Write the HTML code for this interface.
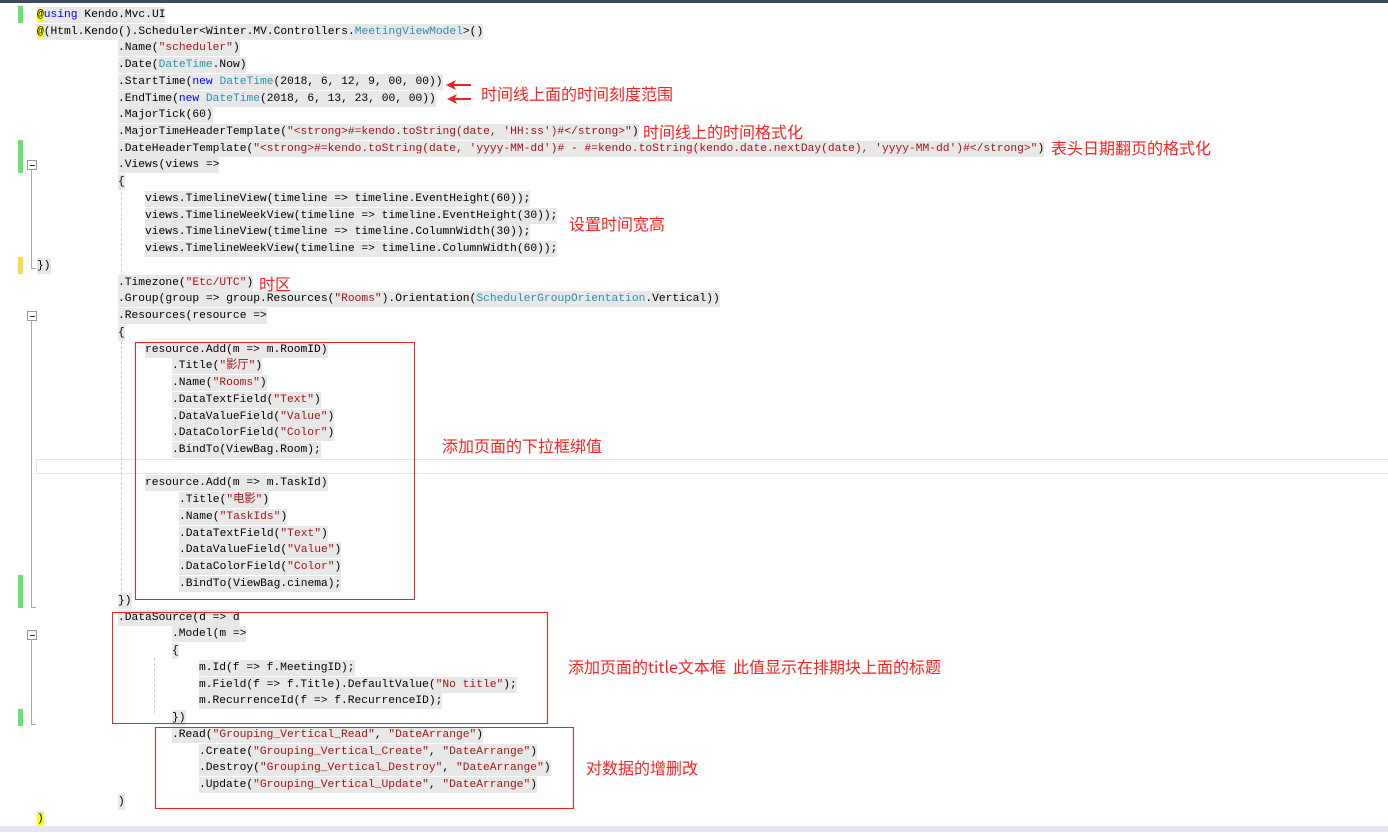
<!DOCTYPE html>
<html><head><meta charset="utf-8"><style>
body{margin:0;width:1388px;height:832px;background:#fff;position:relative;overflow:hidden;font-family:"Liberation Mono","Noto Sans CJK SC",monospace;}
.w{position:absolute;left:0;top:1px;width:1388px;height:832px;}
.l{position:absolute;height:16px;white-space:pre;font-size:11.28px;line-height:16px;color:#000;}
.l span.b{background:#e8e8e8;display:inline-block;height:16px;}
.s{color:#a31515}.k{color:#0000ff}.t{color:#2b91af}.y{background:#ffff00}
.n{position:absolute;color:#ff2020;font-family:"Noto Sans CJK SC","WenQuanYi Zen Hei",sans-serif;font-size:16px;line-height:20px;white-space:pre;}
.box{position:absolute;border:1px solid #ee2222;}
.g{position:absolute;left:18px;width:5px;background:#6ee06e;}
.yb{position:absolute;left:18px;width:5px;background:#f0e050;}
.c{position:absolute;left:27px;width:8px;height:8px;border:1px solid #999;background:#fff;}
.c:after{content:"";position:absolute;left:2px;top:4px;width:5px;height:1px;background:#333;}
.v{position:absolute;left:31px;width:1px;background:#aaa;}
.d{position:absolute;width:0;border-left:1px dashed #ccc;}
</style></head><body>
<div style="position:absolute;left:0;top:0;width:1388px;height:3px;background:#3c4a5e"></div>
<div style="position:absolute;left:0;top:826px;width:1388px;height:6px;background:#e6e6ec"></div>
<div style="position:absolute;left:36px;top:459px;width:1352px;height:13px;border:1px solid #e4e4ee"></div>

<div class="g" style="top:6px;height:17px"></div>
<div class="g" style="top:140px;height:33px"></div>
<div class="yb" style="top:257px;height:17px"></div>
<div class="g" style="top:575px;height:33px"></div>
<div class="g" style="top:709px;height:17px"></div>
<div class="c" style="top:160px"></div><div class="v" style="top:170px;height:99px"></div><div style="position:absolute;left:31px;top:268px;width:5px;height:1px;background:#aaa"></div>
<div class="c" style="top:311px"></div><div class="v" style="top:321px;height:287px"></div><div style="position:absolute;left:31px;top:607px;width:5px;height:1px;background:#aaa"></div>
<div class="c" style="top:630px"></div><div class="v" style="top:640px;height:85px"></div><div style="position:absolute;left:31px;top:724px;width:5px;height:1px;background:#aaa"></div>
<div class="d" style="left:121px;top:182px;height:110px"></div>
<div class="d" style="left:121px;top:341px;height:250px"></div>
<div class="d" style="left:154px;top:658px;height:55px"></div>

<div class="w">
<div class="l" style="top:6px;left:37px"><span class="b"><span class="y">@</span><span class="k">using</span> Kendo.Mvc.UI</span></div>
<div class="l" style="top:23px;left:37px"><span class="b"><span class="y">@</span>(Html.Kendo().Scheduler&lt;Winter.MV.Controllers.<span class="t">MeetingViewModel</span>&gt;()</span></div>
<div class="l" style="top:39px;left:118px"><span class="b">.Name(<span class="s">"scheduler"</span>)</span></div>
<div class="l" style="top:56px;left:118px"><span class="b">.Date(<span class="t">DateTime</span>.Now)</span></div>
<div class="l" style="top:73px;left:118px"><span class="b">.StartTime(<span class="k">new</span> <span class="t">DateTime</span>(2018, 6, 12, 9, 00, 00))</span></div>
<div class="l" style="top:90px;left:118px"><span class="b">.EndTime(<span class="k">new</span> <span class="t">DateTime</span>(2018, 6, 13, 23, 00, 00))</span></div>
<div class="l" style="top:106px;left:118px"><span class="b">.MajorTick(60)</span></div>
<div class="l" style="top:123px;left:118px"><span class="b">.MajorTimeHeaderTemplate(<span class="s">"&lt;strong&gt;#=kendo.toString(date, 'HH:ss')#&lt;/strong&gt;"</span>)</span></div>
<div class="l" style="top:140px;left:118px"><span class="b">.DateHeaderTemplate(<span class="s">"&lt;strong&gt;#=kendo.toString(date, 'yyyy-MM-dd')# - #=kendo.toString(kendo.date.nextDay(date), 'yyyy-MM-dd')#&lt;/strong&gt;"</span>)</span></div>
<div class="l" style="top:156px;left:118px"><span class="b">.Views(views =&gt;</span></div>
<div class="l" style="top:173px;left:118px"><span class="b">{</span></div>
<div class="l" style="top:190px;left:145px"><span class="b">views.TimelineView(timeline =&gt; timeline.EventHeight(60));</span></div>
<div class="l" style="top:207px;left:145px"><span class="b">views.TimelineWeekView(timeline =&gt; timeline.EventHeight(30));</span></div>
<div class="l" style="top:223px;left:145px"><span class="b">views.TimelineView(timeline =&gt; timeline.ColumnWidth(30));</span></div>
<div class="l" style="top:240px;left:145px"><span class="b">views.TimelineWeekView(timeline =&gt; timeline.ColumnWidth(60));</span></div>
<div class="l" style="top:257px;left:37px"><span class="b">})</span></div>
<div class="l" style="top:274px;left:118px"><span class="b">.Timezone(<span class="s">"Etc/UTC"</span>)</span></div>
<div class="l" style="top:290px;left:118px"><span class="b">.Group(group =&gt; group.Resources(<span class="s">"Rooms"</span>).Orientation(<span class="t">SchedulerGroupOrientation</span>.Vertical))</span></div>
<div class="l" style="top:307px;left:118px"><span class="b">.Resources(resource =&gt;</span></div>
<div class="l" style="top:324px;left:118px"><span class="b">{</span></div>
<div class="l" style="top:341px;left:145px"><span class="b">resource.Add(m =&gt; m.RoomID)</span></div>
<div class="l" style="top:357px;left:172px"><span class="b">.Title(<span class="s">"影厅"</span>)</span></div>
<div class="l" style="top:374px;left:172px"><span class="b">.Name(<span class="s">"Rooms"</span>)</span></div>
<div class="l" style="top:391px;left:172px"><span class="b">.DataTextField(<span class="s">"Text"</span>)</span></div>
<div class="l" style="top:408px;left:172px"><span class="b">.DataValueField(<span class="s">"Value"</span>)</span></div>
<div class="l" style="top:424px;left:172px"><span class="b">.DataColorField(<span class="s">"Color"</span>)</span></div>
<div class="l" style="top:441px;left:172px"><span class="b">.BindTo(ViewBag.Room);</span></div>
<div class="l" style="top:474px;left:145px"><span class="b">resource.Add(m =&gt; m.TaskId)</span></div>
<div class="l" style="top:491px;left:179px"><span class="b">.Title(<span class="s">"电影"</span>)</span></div>
<div class="l" style="top:508px;left:179px"><span class="b">.Name(<span class="s">"TaskIds"</span>)</span></div>
<div class="l" style="top:525px;left:179px"><span class="b">.DataTextField(<span class="s">"Text"</span>)</span></div>
<div class="l" style="top:541px;left:179px"><span class="b">.DataValueField(<span class="s">"Value"</span>)</span></div>
<div class="l" style="top:558px;left:179px"><span class="b">.DataColorField(<span class="s">"Color"</span>)</span></div>
<div class="l" style="top:575px;left:179px"><span class="b">.BindTo(ViewBag.cinema);</span></div>
<div class="l" style="top:592px;left:118px"><span class="b">})</span></div>
<div class="l" style="top:609px;left:118px"><span class="b">.DataSource(d =&gt; d</span></div>
<div class="l" style="top:625px;left:172px"><span class="b">.Model(m =&gt;</span></div>
<div class="l" style="top:642px;left:172px"><span class="b">{</span></div>
<div class="l" style="top:659px;left:199px"><span class="b">m.Id(f =&gt; f.MeetingID);</span></div>
<div class="l" style="top:676px;left:199px"><span class="b">m.Field(f =&gt; f.Title).DefaultValue(<span class="s">"No title"</span>);</span></div>
<div class="l" style="top:692px;left:199px"><span class="b">m.RecurrenceId(f =&gt; f.RecurrenceID);</span></div>
<div class="l" style="top:709px;left:172px"><span class="b">})</span></div>
<div class="l" style="top:726px;left:172px"><span class="b">.Read(<span class="s">"Grouping_Vertical_Read"</span>, <span class="s">"DateArrange"</span>)</span></div>
<div class="l" style="top:743px;left:199px"><span class="b">.Create(<span class="s">"Grouping_Vertical_Create"</span>, <span class="s">"DateArrange"</span>)</span></div>
<div class="l" style="top:759px;left:199px"><span class="b">.Destroy(<span class="s">"Grouping_Vertical_Destroy"</span>, <span class="s">"DateArrange"</span>)</span></div>
<div class="l" style="top:776px;left:199px"><span class="b">.Update(<span class="s">"Grouping_Vertical_Update"</span>, <span class="s">"DateArrange"</span>)</span></div>
<div class="l" style="top:793px;left:118px"><span class="b">)</span></div>
<div class="l" style="top:810px;left:37px"><span class="b"><span class="y">)</span></span></div>
</div>

<svg style="position:absolute;left:444px;top:78px" width="30" height="28"><path d="M2 7 L12 2 L10 6 L27 6 L27 8 L10 8 L12 12 Z" fill="#ee2222"/><path d="M3 21 L13 16 L11 20 L27 20 L27 22 L11 22 L13 26 Z" fill="#ee2222"/></svg>
<div class="n" style="left:481px;top:83px">时间线上面的时间刻度范围</div>
<div class="n" style="left:643px;top:121px">时间线上的时间格式化</div>
<div class="n" style="left:1051px;top:137px">表头日期翻页的格式化</div>
<div class="n" style="left:569px;top:213px">设置时间宽高</div>
<div class="n" style="left:259px;top:273px">时区</div>
<div class="n" style="left:442px;top:435px">添加页面的下拉框绑值</div>
<div class="n" style="left:568px;top:656px">添加页面的title文本框  此值显示在排期块上面的标题</div>
<div class="n" style="left:586px;top:757px">对数据的增删改</div>
<div class="box" style="left:135px;top:342px;width:278px;height:256px"></div>
<div class="box" style="left:112px;top:612px;width:434px;height:110px"></div>
<div class="box" style="left:155px;top:727px;width:417px;height:80px"></div>
</body></html>
